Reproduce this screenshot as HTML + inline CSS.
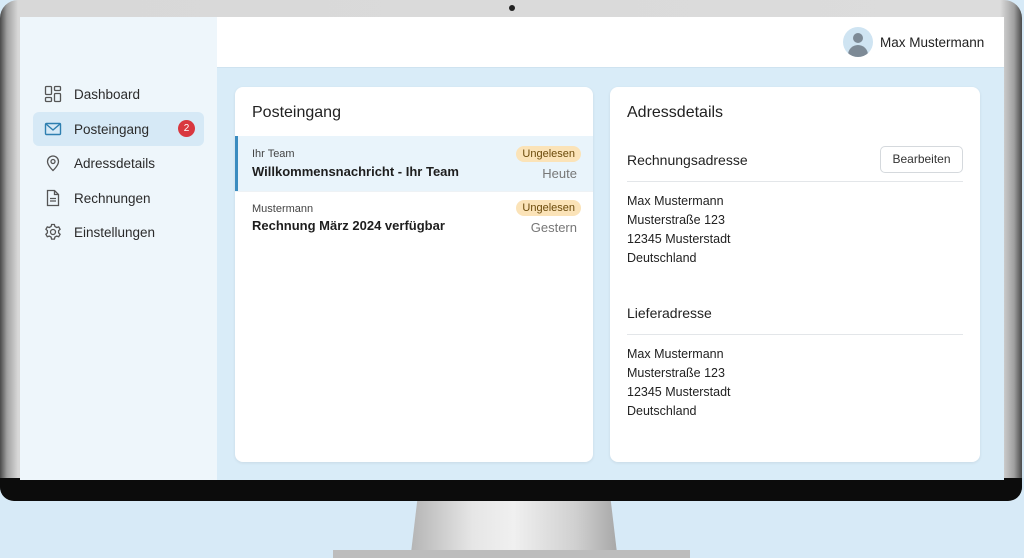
<!DOCTYPE html>
<html><head><meta charset="utf-8"><style>
*{box-sizing:border-box;margin:0;padding:0}
body{width:1024px;height:558px;overflow:hidden;background:#d7eaf7;font-family:"Liberation Sans",sans-serif;position:relative;color:#222}
.bezel{position:absolute;left:0;top:0;width:1022px;height:501px;border-radius:18px 18px 14px 14px;background:linear-gradient(90deg,#4a4a4a 0,#a0a0a0 7px,#d8d8d8 18px,#dcdcdc 1000px,#a0a0a0 1014px,#4a4a4a 1022px)}
.chin{position:absolute;left:0;top:478px;width:1022px;height:23px;background:#0c0c0c;border-radius:0 0 14px 14px}
.stand{position:absolute;left:411px;top:501px;width:206px;height:52px;background:linear-gradient(90deg,#b5b5b5,#e6e6e6 30%,#f0f0f0 50%,#d0d0d0 80%,#a8a8a8);clip-path:polygon(3% 0,97% 0,100% 100%,0 100%)}
.base{position:absolute;left:333px;top:550px;width:357px;height:8px;background:#bdbdbd}
.screen{position:absolute;left:20px;top:17px;width:984px;height:463px;background:#d9ecf8;overflow:hidden}
.side{position:absolute;left:0;top:0;width:197px;height:463px;background:#eef6fb}
.hdr{position:absolute;left:197px;top:0;right:0;height:51px;background:#fff;border-bottom:1px solid #cfe3f0}
.nav{position:absolute;left:13px;width:171px;height:34px;display:flex;align-items:center;font-size:13.5px;color:#2b2b2b}
.nav svg{position:absolute;left:11px}
.nav span{position:absolute;left:41px}
.card{position:absolute;background:#fff;border-radius:8px;box-shadow:0 1px 3px rgba(0,0,0,.08)}
.t{position:absolute;font-size:16px;color:#222}
.pill{position:absolute;background:#fbe3b8;color:#6b4a0a;font-size:11px;padding:2px 6px;border-radius:9px}
.sm{position:absolute;font-size:11px;color:#444}
.b{position:absolute;font-size:13px;font-weight:bold;color:#1e1e1e}
.g{position:absolute;font-size:13px;color:#777}
.addr{position:absolute;font-size:12.5px;line-height:19px;color:#222}
</style></head><body>
<div class="bezel"></div>
<div style="position:absolute;left:509px;top:5px;width:6px;height:6px;border-radius:50%;background:#222"></div>
<div class="chin"></div>
<div class="stand"></div><div class="base"></div>
<div class="screen">
 <div class="side">
  <div class="nav" style="top:60px"><svg width="18" height="18" viewBox="0 0 18 18" fill="none" stroke="#555" stroke-width="1.3"><rect x="1.5" y="1.5" width="6" height="8" rx="1"/><rect x="10.5" y="1.5" width="6" height="4" rx="1"/><rect x="1.5" y="12.5" width="6" height="4" rx="1"/><rect x="10.5" y="8.5" width="6" height="8" rx="1"/></svg><span>Dashboard</span></div>
  <div class="nav" style="top:95px;background:#d6e9f6;border-radius:6px"><svg width="18" height="18" viewBox="0 0 18 18" fill="none" stroke="#2e7fb0" stroke-width="1.4"><rect x="1.5" y="3.5" width="15" height="11" rx="1"/><path d="M2 4l7 6 7-6"/></svg><span>Posteingang</span><div style="position:absolute;left:145px;top:8px;width:17px;height:17px;border-radius:50%;background:#d9373f;color:#fff;font-size:10px;text-align:center;line-height:17px">2</div></div>
  <div class="nav" style="top:129px"><svg width="18" height="18" viewBox="0 0 18 18" fill="none" stroke="#555" stroke-width="1.3"><path d="M9 16.5s5.5-5 5.5-9a5.5 5.5 0 0 0-11 0c0 4 5.5 9 5.5 9z"/><circle cx="9" cy="7.5" r="2"/></svg><span>Adressdetails</span></div>
  <div class="nav" style="top:164px"><svg width="18" height="18" viewBox="0 0 18 18" fill="none" stroke="#555" stroke-width="1.3"><path d="M3.5 1.5h7l4 4v11h-11z"/><path d="M10.5 1.5v4h4M6 9.5h6M6 12h6"/></svg><span>Rechnungen</span></div>
  <div class="nav" style="top:198px"><svg width="18" height="18" viewBox="0 0 18 18" fill="none" stroke="#555" stroke-width="1.3"><circle cx="9" cy="9" r="2.5"/><path d="M7.6 1.5h2.8l.5 2 1.8 1 2-.6 1.4 2.4-1.5 1.4v2.2l1.5 1.4-1.4 2.4-2-.6-1.8 1-.5 2H7.6l-.5-2-1.8-1-2 .6-1.4-2.4 1.5-1.4V7.7L1.9 6.3l1.4-2.4 2 .6 1.8-1z"/></svg><span>Einstellungen</span></div>
 </div>
 <div class="hdr">
  <div style="position:absolute;left:626px;top:10px;width:30px;height:30px;border-radius:50%;background:#cfe4f2;overflow:hidden"><div style="position:absolute;left:10px;top:6px;width:10px;height:10px;border-radius:50%;background:#7d8a96"></div><div style="position:absolute;left:5px;top:18px;width:20px;height:14px;border-radius:10px 10px 0 0;background:#7d8a96"></div></div>
  <div style="position:absolute;left:663px;top:18px;font-size:13.5px;color:#222">Max Mustermann</div>
 </div>
 <div class="card" style="left:215px;top:70px;width:358px;height:375px;overflow:hidden">
  <div class="t" style="left:17px;top:17px">Posteingang</div>
  <div style="position:absolute;left:0;top:49px;width:358px;height:55px;background:#e9f4fb;border-left:3px solid #3b8cc0"></div>
  <div class="sm" style="left:17px;top:61px">Ihr Team</div>
  <div class="b" style="left:17px;top:77px">Willkommensnachricht - Ihr Team</div>
  <div class="pill" style="right:12px;top:59px">Ungelesen</div>
  <div class="g" style="right:16px;top:79px">Heute</div>
  <div style="position:absolute;left:0;top:104px;width:358px;height:1px;background:#eef2f5"></div>
  <div class="sm" style="left:17px;top:116px">Mustermann</div>
  <div class="b" style="left:17px;top:131px">Rechnung März 2024 verfügbar</div>
  <div class="pill" style="right:12px;top:113px">Ungelesen</div>
  <div class="g" style="right:16px;top:133px">Gestern</div>
 </div>
 <div class="card" style="left:590px;top:70px;width:370px;height:375px">
  <div class="t" style="left:17px;top:17px">Adressdetails</div>
  <div style="position:absolute;left:17px;top:65px;font-size:14px">Rechnungsadresse</div>
  <div style="position:absolute;left:270px;top:59px;width:83px;height:27px;border:1px solid #d5d9dd;border-radius:5px;font-size:12px;text-align:center;line-height:25px;color:#333">Bearbeiten</div>
  <div style="position:absolute;left:17px;top:94px;width:336px;height:1px;background:#e3e6e9"></div>
  <div class="addr" style="left:17px;top:105px">Max Mustermann<br>Musterstraße 123<br>12345 Musterstadt<br>Deutschland</div>
  <div style="position:absolute;left:17px;top:218px;font-size:14px">Lieferadresse</div>
  <div style="position:absolute;left:17px;top:247px;width:336px;height:1px;background:#e3e6e9"></div>
  <div class="addr" style="left:17px;top:258px">Max Mustermann<br>Musterstraße 123<br>12345 Musterstadt<br>Deutschland</div>
 </div>
</div>
</body></html>
